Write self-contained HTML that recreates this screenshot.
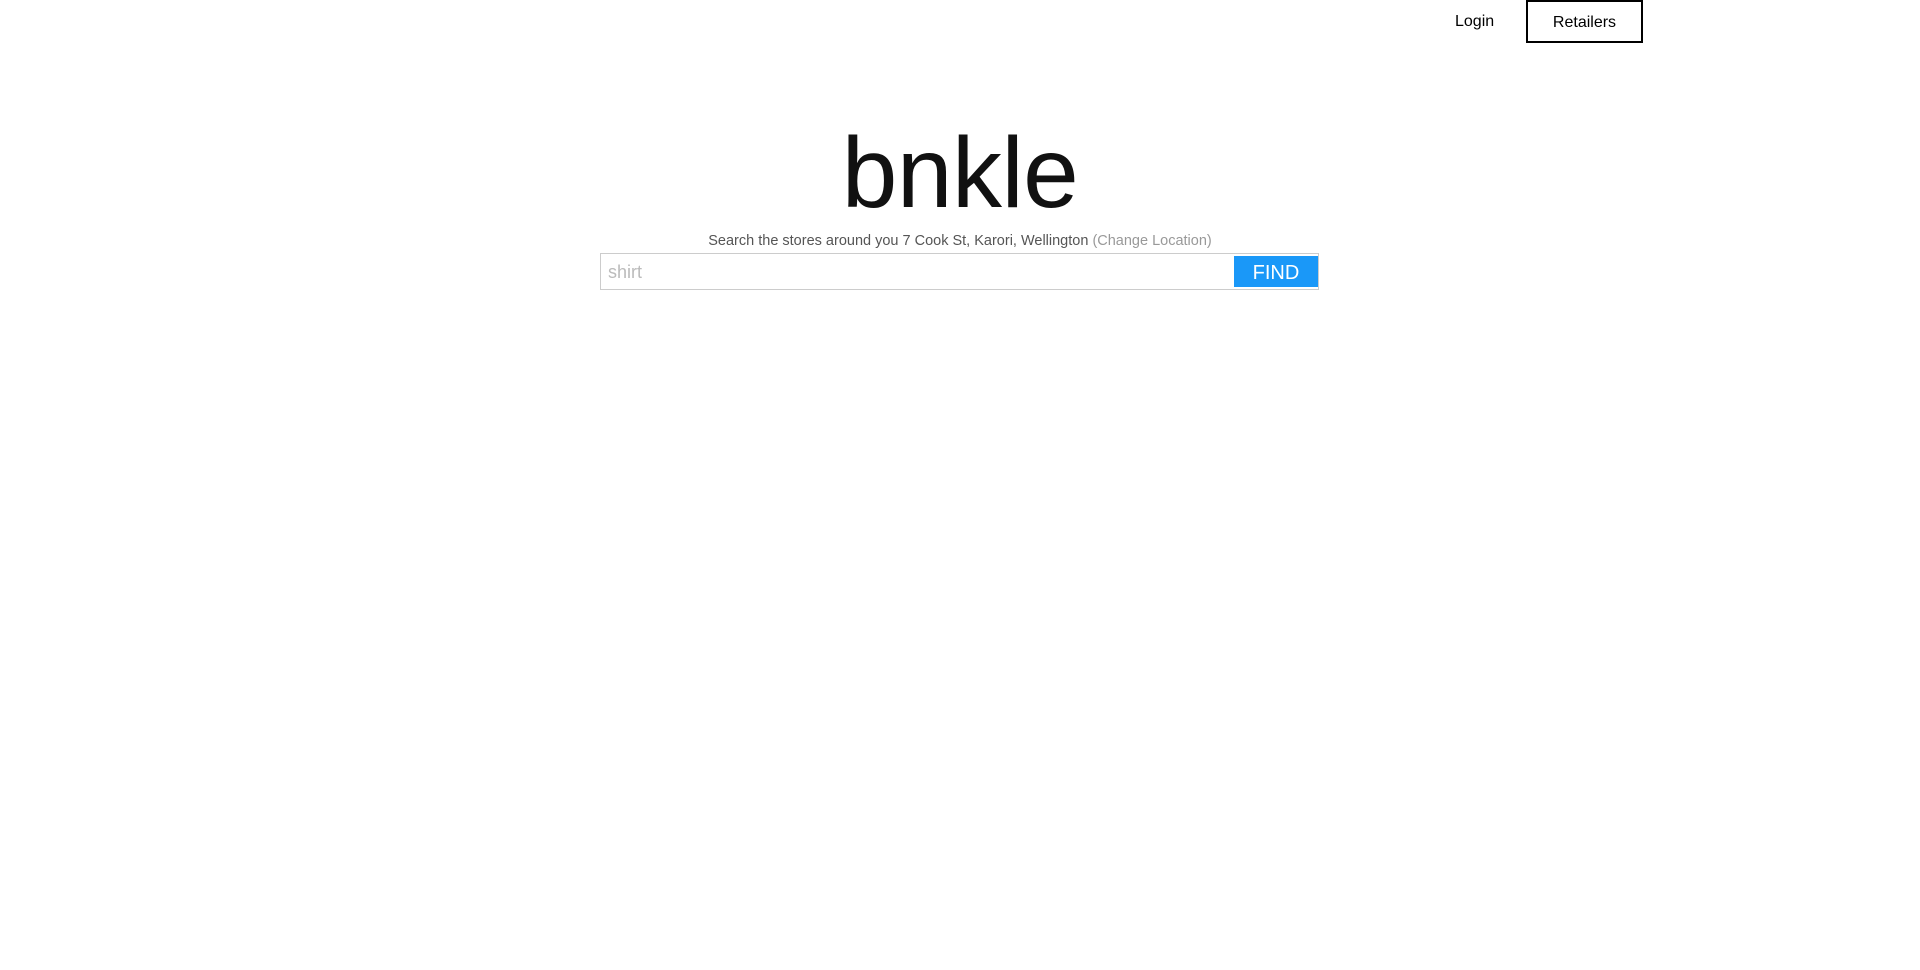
<!DOCTYPE html>
<html><head><meta charset="utf-8"><style>
html,body{margin:0;padding:0;background:#fff;width:1920px;height:970px;overflow:hidden;font-family:"Liberation Sans",Arial,sans-serif;}
.login{position:absolute;left:1455px;top:13px;font-size:16px;color:#000;}
.ret{position:absolute;left:1526px;top:0;width:113px;height:39px;border:2px solid #000;font-size:16px;color:#000;text-align:center;line-height:41px;}
.logo{position:absolute;left:0;width:1920px;top:116px;text-align:center;font-size:100px;line-height:115px;color:#111;letter-spacing:-0.5px;}
.sub{position:absolute;left:0;width:1920px;top:233px;text-align:center;font-size:14.5px;color:#555;}
.sub span{color:#999;}
.inp{position:absolute;left:600px;top:253px;width:717px;height:35px;border:1px solid #ccc;}
.ph{position:absolute;left:7px;top:8px;font-size:18px;color:#bbb;}
.find{position:absolute;left:633px;top:2px;width:84px;height:31px;background:#1a98f8;color:#fff;font-size:20px;text-align:center;line-height:34px;}
</style></head><body>
<div class="login">Login</div>
<div class="ret">Retailers</div>
<div class="logo">bnkle</div>
<div class="sub">Search the stores around you 7 Cook St, Karori, Wellington <span>(Change Location)</span></div>
<div class="inp"><div class="ph">shirt</div><div class="find">FIND</div></div>
</body></html>
